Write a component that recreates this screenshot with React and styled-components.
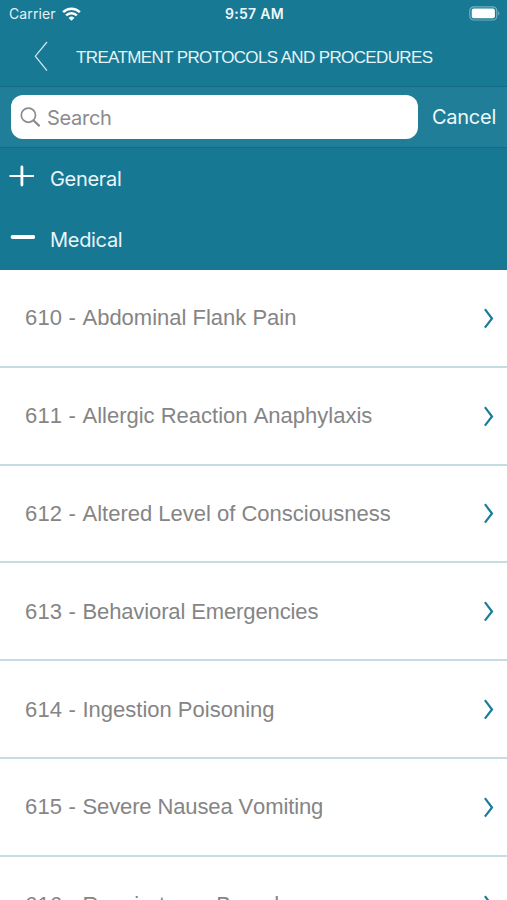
import styled, { createGlobalStyle } from "styled-components";

const sections = [
    { name: 'General', open: false },
    { name: 'Medical', open: true },
];

const protocols = [
    { id: 610, name: 'Abdominal Flank Pain' },
    { id: 611, name: 'Allergic Reaction Anaphylaxis' },
    { id: 612, name: 'Altered Level of Consciousness' },
    { id: 613, name: 'Behavioral Emergencies', spacing: -.12 },
    { id: 614, name: 'Ingestion Poisoning' },
    { id: 615, name: 'Severe Nausea Vomiting', spacing: -.12 },
    { id: 616, name: 'Respiratory - Bronchospasm', spacing: .12 },
];

const WifiIcon = () => (
    <svg width="19" height="14" viewBox="0 0 19 14">
        <g fill="none" stroke="#fff" strokeWidth="2.5">
            <path d="M1.1 5.2a12 12 0 0 1 16.8 0" />
            <path d="M4.1 8.4a7.7 7.7 0 0 1 10.8 0" />
        </g>
        <path d="M9.5 13.8 6.6 10.9a4.2 4.2 0 0 1 5.8 0z" fill="#fff" />
    </svg>
);

const BatteryIcon = () => (
    <svg width="31" height="15" viewBox="0 0 31 15">
        <rect x=".8" y=".8" width="27" height="13.2" rx="4" fill="none" stroke="#76b0c0" strokeWidth="1.2" />
        <rect x="2.7" y="2.6" width="23.2" height="9.6" rx="2" fill="#fff" />
        <path d="M29.2 5.2c1.6.7 1.6 3.7 0 4.4z" fill="#76b0c0" />
    </svg>
);

const BackIcon = () => (
    <svg width="15" height="31" viewBox="0 0 15 31">
        <path d="M13 1 1.3 15.2 13 29.7" fill="none" stroke="#d5e9ee" strokeWidth="1.2" />
    </svg>
);

const SearchIcon = () => (
    <svg width="21" height="21" viewBox="0 0 21 21" fill="none" stroke="#8b8b8f" strokeWidth="1.7">
        <circle cx="8.4" cy="8.2" r="7.1" />
        <path d="m13.6 13.5 5.4 5.1" strokeWidth="2.2" strokeLinecap="round" />
    </svg>
);

const ToggleIcon = ({ open }) => (
    <svg width="26" height="22" viewBox="0 0 26 22" stroke="#fff" strokeLinecap="round">
        {open ? (
            <path d="M3.6 11h20.6" strokeWidth="4" />
        ) : (
            <>
                <path d="M1.2 11h23" strokeWidth="1.9" />
                <path d="M12.9 2v18" strokeWidth="2.8" />
            </>
        )}
    </svg>
);

const ChevronIcon = () => (
    <svg width="11" height="21" viewBox="0 0 11 21">
        <path d="M.9 1.2 8 10.5.9 19.6" fill="none" stroke="#197d99" strokeWidth="2.2" />
    </svg>
);

const App = () => {
    return (
        <Screen>
            <GlobalStyle />
            <StatusBar>
                <Carrier>Carrier <WifiIcon /></Carrier>
                <Time>9:57 AM</Time>
                <Battery><BatteryIcon /></Battery>
            </StatusBar>
            <Header>
                <BackButton aria-label="Back"><BackIcon /></BackButton>
                <Title>TREATMENT PROTOCOLS AND PROCEDURES</Title>
            </Header>
            <SearchBar>
                <SearchField>
                    <SearchIcon />
                    <Input placeholder="Search" />
                </SearchField>
                <Cancel>Cancel</Cancel>
            </SearchBar>
            <Sections>
                {sections.map(({ name, open }) => (
                    <Section key={name}>
                        <ToggleIcon open={open} />
                        <SectionName>{name}</SectionName>
                    </Section>
                ))}
            </Sections>
            <List>
                {protocols.map(({ id, name, spacing }) => (
                    <Row key={id}>
                        <RowName $spacing={spacing}>
                            <RowNumber>{id} - </RowNumber>{name}
                        </RowName>
                        <ChevronIcon />
                    </Row>
                ))}
            </List>
        </Screen>
    );
}

const GlobalStyle = createGlobalStyle`
    * {
        box-sizing:border-box;
    }

    body {
        margin:0;
        overflow:hidden;
        font-family:"Liberation Sans", Arial, sans-serif;
    }

    svg {
        display:block;
        flex-shrink:0;
    }
`

const Screen = styled.main`
    display:flex;
    flex-direction:column;
    height:100vh;
    overflow:hidden;
    color:#fff;
    background:#fff;
`

const StatusBar = styled.div`
    display:grid;
    grid-template-columns:1fr auto 1fr;
    align-items:center;
    flex-shrink:0;
    height:27px;
    padding:0 7px 0 9px;
    background:#177994;
    font-family:Inter, sans-serif;
`

const Carrier = styled.div`
    display:flex;
    align-items:center;
    gap:6px;
    font-size:14px;
    letter-spacing:.1px;
    color:#e3f1f5;
`

const Time = styled.div`
    font-size:14px;
    font-weight:600;
    letter-spacing:.3px;
    color:#eef8fa;
`

const Battery = styled.div`
    display:flex;
    justify-content:flex-end;
`

const Header = styled.header`
    display:flex;
    align-items:center;
    flex-shrink:0;
    height:60px;
    padding-left:34px;
    background:#177994;
    border-bottom:1px solid #126c86;
`

const BackButton = styled.button`
    width:42px;
    padding:0;
    border:0;
    background:none;
`

const Title = styled.h1`
    margin:0;
    padding-top:2px;
    font-size:17px;
    font-weight:400;
    letter-spacing:-.63px;
    white-space:nowrap;
    color:#e3f4f8;
`

const SearchBar = styled.div`
    display:flex;
    align-items:center;
    flex-shrink:0;
    height:61px;
    padding:0 11px;
    background:#207e98;
    border-bottom:1px solid #126c86;
    font-family:Inter, sans-serif;
`

const SearchField = styled.label`
    display:flex;
    align-items:center;
    gap:6px;
    width:408px;
    height:44px;
    padding-left:9px;
    border-radius:12px;
    background:#fff;
`

const Input = styled.input`
    flex:1;
    min-width:0;
    padding:1px 0 0;
    border:0;
    outline:0;
    background:none;
    font:400 20px Inter, sans-serif;
    letter-spacing:-.3px;

    &::placeholder {
        color:#8b8b8f;
    }
`

const Cancel = styled.span`
    margin-left:14px;
    font-size:20px;
    letter-spacing:-.25px;
    color:#eef8fa;
`

const Sections = styled.div`
    flex-shrink:0;
    height:122px;
    background:#177894;
`

const Section = styled.div`
    display:flex;
    align-items:center;
    gap:15px;
    height:61px;
    padding-left:9px;

    svg {
        margin-bottom:6px;
    }
`

const SectionName = styled.span`
    font:400 20px Inter, sans-serif;
    letter-spacing:-.3px;
    color:#e9f6f9;
`

const List = styled.div`
    flex-shrink:0;
`

const Row = styled.div`
    display:flex;
    align-items:center;
    justify-content:space-between;
    height:97.8px;
    padding:1px 12px 0 25px;
    border-bottom:2px solid #c5dce4;
`

const RowName = styled.span`
    font-size:22px;
    font-kerning:none;
    letter-spacing:${props => props.$spacing || 0}px;
    white-space:nowrap;
    color:#858585;
`

const RowNumber = styled.span`
    letter-spacing:.2px;
    white-space:pre;
`

export default App;
